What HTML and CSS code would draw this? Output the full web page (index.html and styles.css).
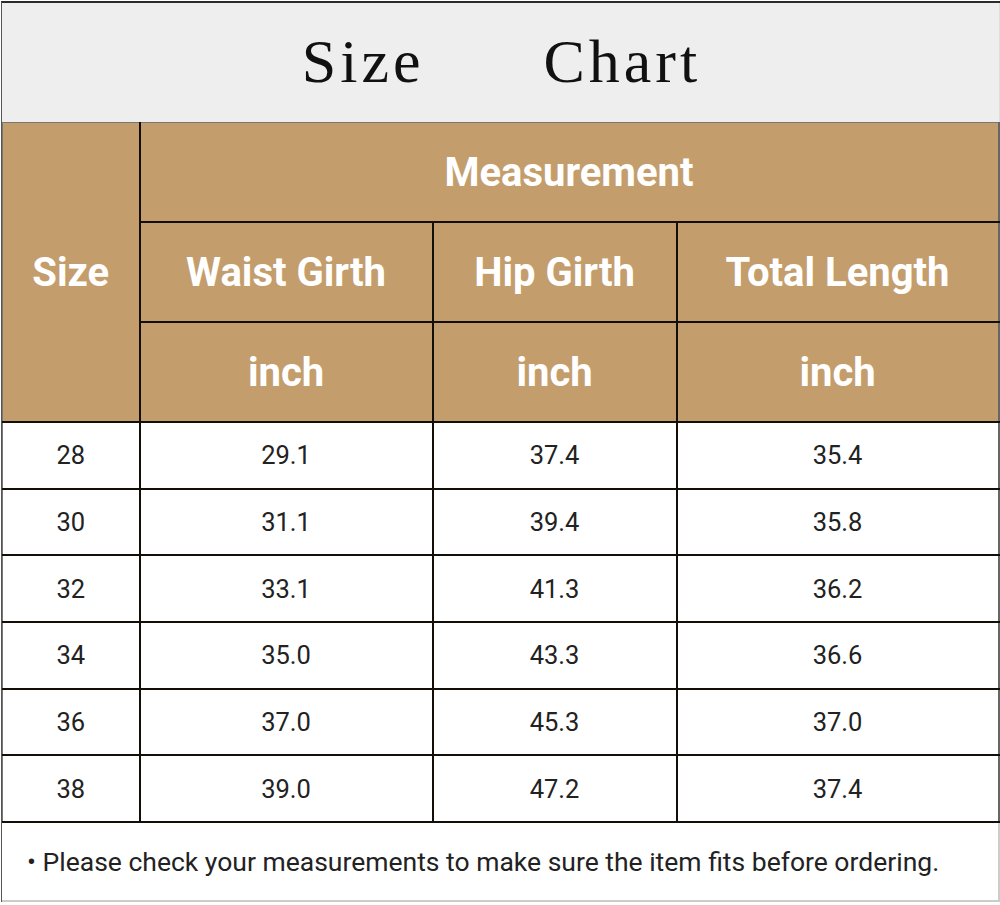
FILE: index.html
```html
<!DOCTYPE html>
<html>
<head>
<meta charset="utf-8">
<link rel="stylesheet" href="styles.css">
</head>
<body>
<div class="sheet">
  <div class="title">
    <span class="word">Size</span><span class="word">Chart</span>
  </div>
  <table class="chart">
    <colgroup>
      <col class="c1"><col class="c2"><col class="c3"><col class="c4">
    </colgroup>
    <thead>
      <tr class="hrow"><th rowspan="3" class="size-h">Size</th><th colspan="3">Measurement</th></tr>
      <tr class="hrow"><th>Waist Girth</th><th>Hip Girth</th><th>Total Length</th></tr>
      <tr class="hrow"><th>inch</th><th>inch</th><th>inch</th></tr>
    </thead>
    <tbody>
      <tr><td>28</td><td>29.1</td><td>37.4</td><td>35.4</td></tr>
      <tr><td>30</td><td>31.1</td><td>39.4</td><td>35.8</td></tr>
      <tr><td>32</td><td>33.1</td><td>41.3</td><td>36.2</td></tr>
      <tr><td>34</td><td>35.0</td><td>43.3</td><td>36.6</td></tr>
      <tr><td>36</td><td>37.0</td><td>45.3</td><td>37.0</td></tr>
      <tr><td>38</td><td>39.0</td><td>47.2</td><td>37.4</td></tr>
    </tbody>
  </table>
  <div class="note">• Please check your measurements to make sure the item fits before ordering.</div>
</div>
</body>
</html>
```
FILE: styles.css
```css
html, body {
  margin: 0;
  padding: 0;
  background: #ffffff;
}
.sheet {
  width: 998px;
  margin: 1px 0 0 1px;
  border-top: 2px solid #2a2a2a;
  border-left: 1px solid #555;
}
.title {
  height: 119px;
  background: #eeeeee;
  display: flex;
  justify-content: center;
  align-items: center;
  gap: 119px;
  font-family: "Liberation Serif", serif;
  font-size: 62px;
  letter-spacing: 4px;
  color: #111;
  padding-left: 2px;
  border-right: 1px solid #ddd;
}
.word {
  line-height: 1;
  padding-bottom: 4px;
}
.chart {
  border-collapse: collapse;
  table-layout: fixed;
  width: 996px;
  font-family: Roboto, "Liberation Sans", sans-serif;
}
.c1 { width: 137px; }
.c2 { width: 293px; }
.c3 { width: 244px; }
.c4 { width: 322px; }
.chart th, .chart td {
  border: 2px solid #140e08;
  padding: 0;
  text-align: center;
}
.chart th {
  background: #c49d6c;
  color: #ffffff;
  font-weight: 700;
  font-size: 40px;
  height: 98px;
}
.chart tr:first-child th {
  border-top: 1px solid #777;
}
.chart th.size-h {
  border-left: 1px solid #777;
}
.chart th:last-child, .chart td:last-child {
  border-right: 2px solid #666;
}
.chart td {
  background: #fff;
  color: #222;
  font-size: 25.5px;
  height: 64.7px;
}
.chart td:first-child {
  border-left: 1px solid #777;
}
.note {
  height: 77px;
  display: flex;
  align-items: center;
  padding-left: 25px;
  font-family: Roboto, "Liberation Sans", sans-serif;
  font-size: 26.5px;
  color: #222;
  border-right: 2px solid #ccc;
  border-bottom: 2px solid #ccc;
}
```
